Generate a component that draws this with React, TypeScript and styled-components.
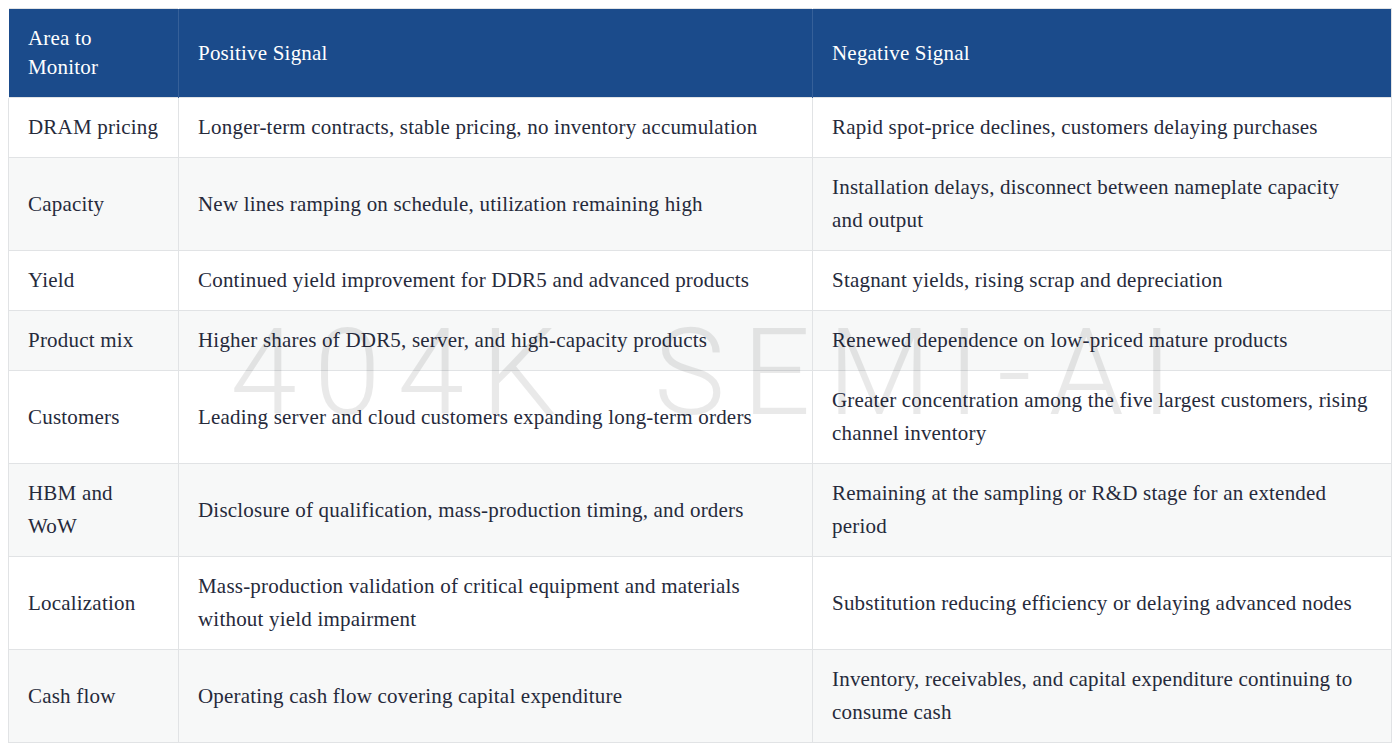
import React from 'react';
import styled, { createGlobalStyle } from 'styled-components';

const GlobalStyle = createGlobalStyle`
  body {
    margin: 8px;
    background: #ffffff;
    font-family: "Liberation Serif", "DejaVu Serif", serif;
  }
`;

interface SignalRow {
  area: React.ReactNode;
  positive: string;
  negative: string;
}

const rows: SignalRow[] = [
  {
    area: 'DRAM pricing',
    positive: 'Longer-term contracts, stable pricing, no inventory accumulation',
    negative: 'Rapid spot-price declines, customers delaying purchases',
  },
  {
    area: 'Capacity',
    positive: 'New lines ramping on schedule, utilization remaining high',
    negative: 'Installation delays, disconnect between nameplate capacity and output',
  },
  {
    area: 'Yield',
    positive: 'Continued yield improvement for DDR5 and advanced products',
    negative: 'Stagnant yields, rising scrap and depreciation',
  },
  {
    area: 'Product mix',
    positive: 'Higher shares of DDR5, server, and high-capacity products',
    negative: 'Renewed dependence on low-priced mature products',
  },
  {
    area: 'Customers',
    positive: 'Leading server and cloud customers expanding long-term orders',
    negative: 'Greater concentration among the five largest customers, rising channel inventory',
  },
  {
    area: (
      <>
        HBM and
        <br />
        WoW
      </>
    ),
    positive: 'Disclosure of qualification, mass-production timing, and orders',
    negative: 'Remaining at the sampling or R&D stage for an extended period',
  },
  {
    area: 'Localization',
    positive: 'Mass-production validation of critical equipment and materials without yield impairment',
    negative: 'Substitution reducing efficiency or delaying advanced nodes',
  },
  {
    area: 'Cash flow',
    positive: 'Operating cash flow covering capital expenditure',
    negative: 'Inventory, receivables, and capital expenditure continuing to consume cash',
  },
];

const Wrapper = styled.div`
  position: relative;
`;

const Table = styled.table`
  width: 100%;
  border-collapse: collapse;
  table-layout: fixed;
  border: 1px solid #e1e3e5;
  color: #262a3b;
  font-size: 21px;
  letter-spacing: 0.2px;
`;

const HeadCell = styled.th`
  background: #1b4b8b;
  color: #ffffff;
  font-weight: 400;
  text-align: left;
  line-height: 29px;
  padding: 15px 19px 15px;
  border-left: 1px solid rgba(255, 255, 255, 0.12);
  vertical-align: middle;
`;

const Row = styled.tr<{ $striped: boolean }>`
  background: ${(p) => (p.$striped ? '#f7f8f8' : '#ffffff')};
`;

const Cell = styled.td<{ $nowrap?: boolean }>`
  line-height: 33px;
  padding: 13px 19px 13px;
  border: 1px solid #e1e3e5;
  vertical-align: middle;
  white-space: ${(p) => (p.$nowrap ? 'nowrap' : 'normal')};
`;

const Watermark = styled.div`
  position: absolute;
  left: 0;
  right: 0;
  top: 290px;
  padding-left: 20px;
  text-align: center;
  pointer-events: none;
  font-family: Roboto, "Liberation Sans", sans-serif;
  font-weight: 300;
  font-size: 120px;
  line-height: 150px;
  letter-spacing: 17px;
  word-spacing: 34px;
  color: rgba(0, 0, 0, 0.085);
  white-space: nowrap;
`;

export default function App() {
  return (
    <>
      <GlobalStyle />
      <Wrapper>
        <Table>
          <colgroup>
            <col style={{ width: 170 }} />
            <col style={{ width: 634 }} />
            <col />
          </colgroup>
          <thead>
            <tr>
              <HeadCell>
                Area to
                <br />
                Monitor
              </HeadCell>
              <HeadCell>Positive Signal</HeadCell>
              <HeadCell>Negative Signal</HeadCell>
            </tr>
          </thead>
          <tbody>
            {rows.map((r, i) => (
              <Row key={i} $striped={i % 2 === 1}>
                <Cell $nowrap>{r.area}</Cell>
                <Cell>{r.positive}</Cell>
                <Cell>{r.negative}</Cell>
              </Row>
            ))}
          </tbody>
        </Table>
        <Watermark>404K SEMI-AI</Watermark>
      </Wrapper>
    </>
  );
}
